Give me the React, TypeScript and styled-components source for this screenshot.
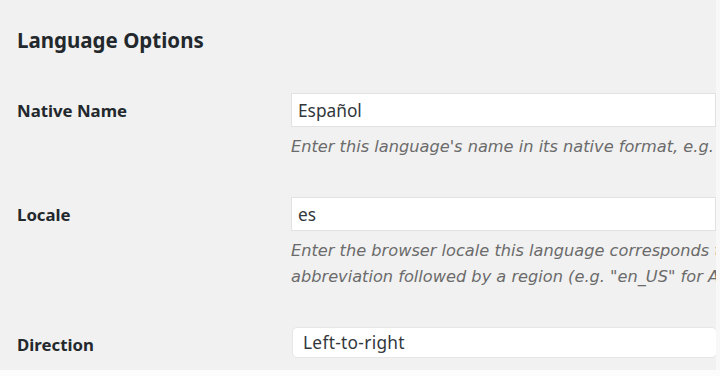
import styled, { createGlobalStyle } from "styled-components";

const GlobalStyle = createGlobalStyle`
  html, body {
    margin: 0;
    padding: 0;
    background: #f1f1f1;
    overflow: hidden;
  }
  body {
    font-family: "Noto Sans", "Liberation Sans", Arial, sans-serif;
    color: #23282d;
  }
`;

const Page = styled.div`
  width: 720px;
  height: 376px;
  display: flex;
  flex-direction: column;
  overflow: hidden;
`;

const Body = styled.div`
  flex: 1;
  display: flex;
  min-height: 0;
`;

const Section = styled.div`
  width: 716px;
  overflow: hidden;
  padding: 30px 0 0 17px;
  box-sizing: border-box;
`;

const Edge = styled.div`
  flex: 1;
  background: #f8f8f8;
`;

const Title = styled.h2`
  margin: 0 0 43px;
  font-size: 20.5px;
  font-weight: 700;
  line-height: 20px;
  color: #23282d;
`;

const Table = styled.div`
  display: grid;
  grid-template-columns: 274px 600px;
  row-gap: 37px;
`;

const Label = styled.div`
  font-size: 16.8px;
  font-weight: 700;
  height: 34px;
  display: flex;
  align-items: center;
  color: #23282d;
`;

const Field = styled.div`
  display: flex;
  flex-direction: column;
  align-items: flex-start;
`;

const Input = styled.input`
  box-sizing: border-box;
  width: 425px;
  height: 34px;
  margin: 0;
  padding: 0 6px;
  border: 1px solid #e2e2e2;
  border-radius: 0;
  background: #fff;
  font-family: inherit;
  font-size: 17.3px;
  color: #32373c;
  outline: none;
`;

const Select = styled.div`
  box-sizing: border-box;
  width: 425px;
  height: 31px;
  margin-left: 1px;
  padding: 0 10px;
  border: 1px solid #e6e6e6;
  border-radius: 5px;
  background: #fff;
  font-size: 17.3px;
  letter-spacing: 0.3px;
  color: #32373c;
  display: flex;
  align-items: center;
`;

const Description = styled.p`
  margin: 7px 0 0;
  font-family: "DejaVu Sans", "Noto Sans", sans-serif;
  font-size: 16.2px;
  font-style: italic;
  line-height: 26px;
  color: #6b6b6b;
  white-space: nowrap;
`;

const Footer = styled.div`
  height: 6px;
  background: #fcfcfc;
`;

export default function App() {
  return (
    <Page>
      <GlobalStyle />
      <Body>
        <Section>
          <Title>Language Options</Title>
          <Table>
            <Label>Native Name</Label>
            <Field>
              <Input defaultValue="Español" />
              <Description>
                Enter this language's name in its native format, e.g. Español
              </Description>
            </Field>

            <Label>Locale</Label>
            <Field>
              <Input defaultValue="es" />
              <Description>
                Enter the browser locale this language corresponds to, e.g. a
                two-letter ISO code
                <br />
                abbreviation followed by a region (e.g. "en_US" for American
                English)
              </Description>
            </Field>

            <Label>Direction</Label>
            <Field>
              <Select>Left-to-right</Select>
            </Field>
          </Table>
        </Section>
        <Edge />
      </Body>
      <Footer />
    </Page>
  );
}
